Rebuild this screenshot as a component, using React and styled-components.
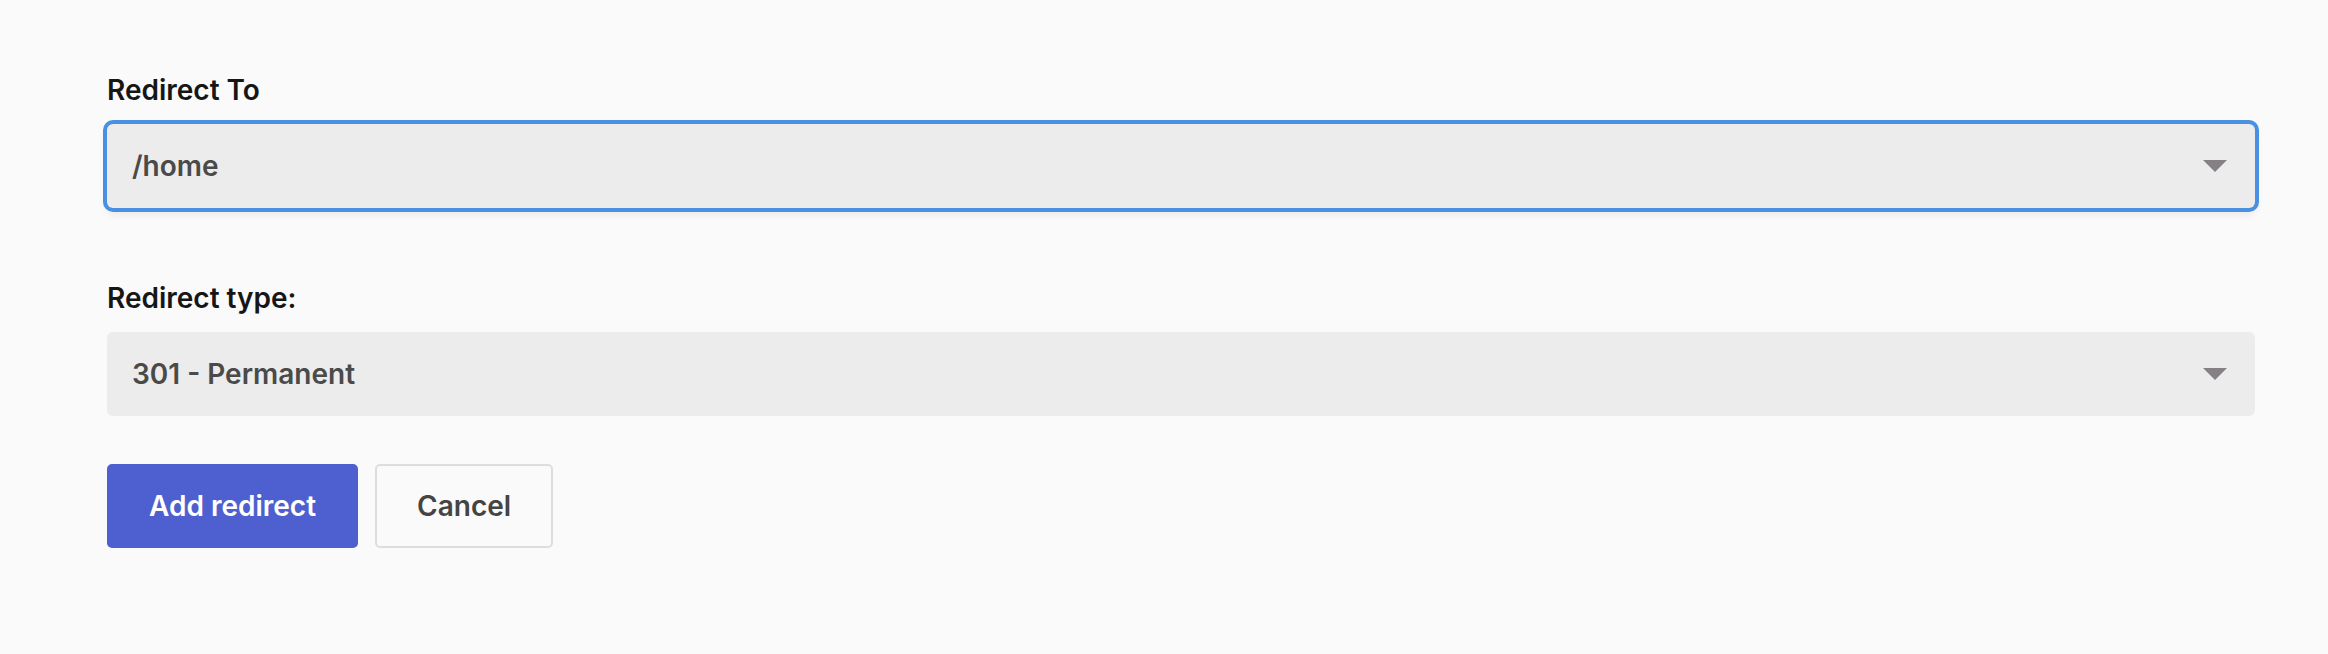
import React from "react"
import styled, { createGlobalStyle } from "styled-components"

const GlobalStyle = createGlobalStyle`
  html, body {
    margin: 0;
    padding: 0;
    background: #fafafa;
  }
  body {
    font-family: Inter, "Noto Sans", sans-serif;
  }
`

const Page = styled.div`
  min-height: 654px;
  box-sizing: border-box;
  padding: 70px 73px 0 107px;
  background: #fafafa;
`

const Form = styled.form`
  display: flex;
  flex-direction: column;
`

const Field = styled.div`
  display: flex;
  flex-direction: column;
  gap: 14px;
  margin-bottom: ${(props) => props.spacing}px;
`

const Label = styled.label`
  font-size: 28px;
  line-height: 40px;
  font-weight: 600;
  color: #161616;
`

const SelectBox = styled.div`
  height: 84px;
  box-sizing: border-box;
  display: flex;
  align-items: center;
  padding: 0 28px 0 25px;
  border-radius: 6px;
  background: #ececec;
  font-size: 28px;
  font-weight: 600;
  color: #4a4a4a;
  box-shadow: ${(props) =>
    props.focused
      ? "0 0 0 4px #4a90e2, 0 6px 10px rgba(0, 0, 0, 0.08)"
      : "none"};
`

const SelectValue = styled.span`
  flex: 1;
`

const Caret = styled.svg`
  width: 24px;
  height: 12px;
  fill: #858083;
`

const Actions = styled.div`
  display: flex;
  gap: 17px;
`

const Button = styled.button`
  height: 84px;
  box-sizing: border-box;
  padding: 0 40px;
  border-radius: 5px;
  font-family: Inter, "Noto Sans", sans-serif;
  font-size: 28px;
  font-weight: 600;
  cursor: pointer;
  border: 2px solid ${(props) => (props.primary ? "#4e5fd0" : "#dddddd")};
  background: ${(props) => (props.primary ? "#4e5fd0" : "#fafafa")};
  color: ${(props) => (props.primary ? "#ffffff" : "#444444")};
`

const Select = ({ value, focused }) => (
  <SelectBox focused={focused}>
    <SelectValue>{value}</SelectValue>
    <Caret viewBox="0 0 24 12">
      <path d="M0 0 L24 0 L12 12 Z" />
    </Caret>
  </SelectBox>
)

const App = () => {
  return (
    <Page>
      <GlobalStyle />
      <Form onSubmit={(e) => e.preventDefault()}>
        <Field spacing={70}>
          <Label>Redirect To</Label>
          <Select value="/home" focused />
        </Field>
        <Field spacing={48}>
          <Label>Redirect type:</Label>
          <Select value="301 - Permanent" />
        </Field>
        <Actions>
          <Button primary>Add redirect</Button>
          <Button type="button">Cancel</Button>
        </Actions>
      </Form>
    </Page>
  )
}

export default App
